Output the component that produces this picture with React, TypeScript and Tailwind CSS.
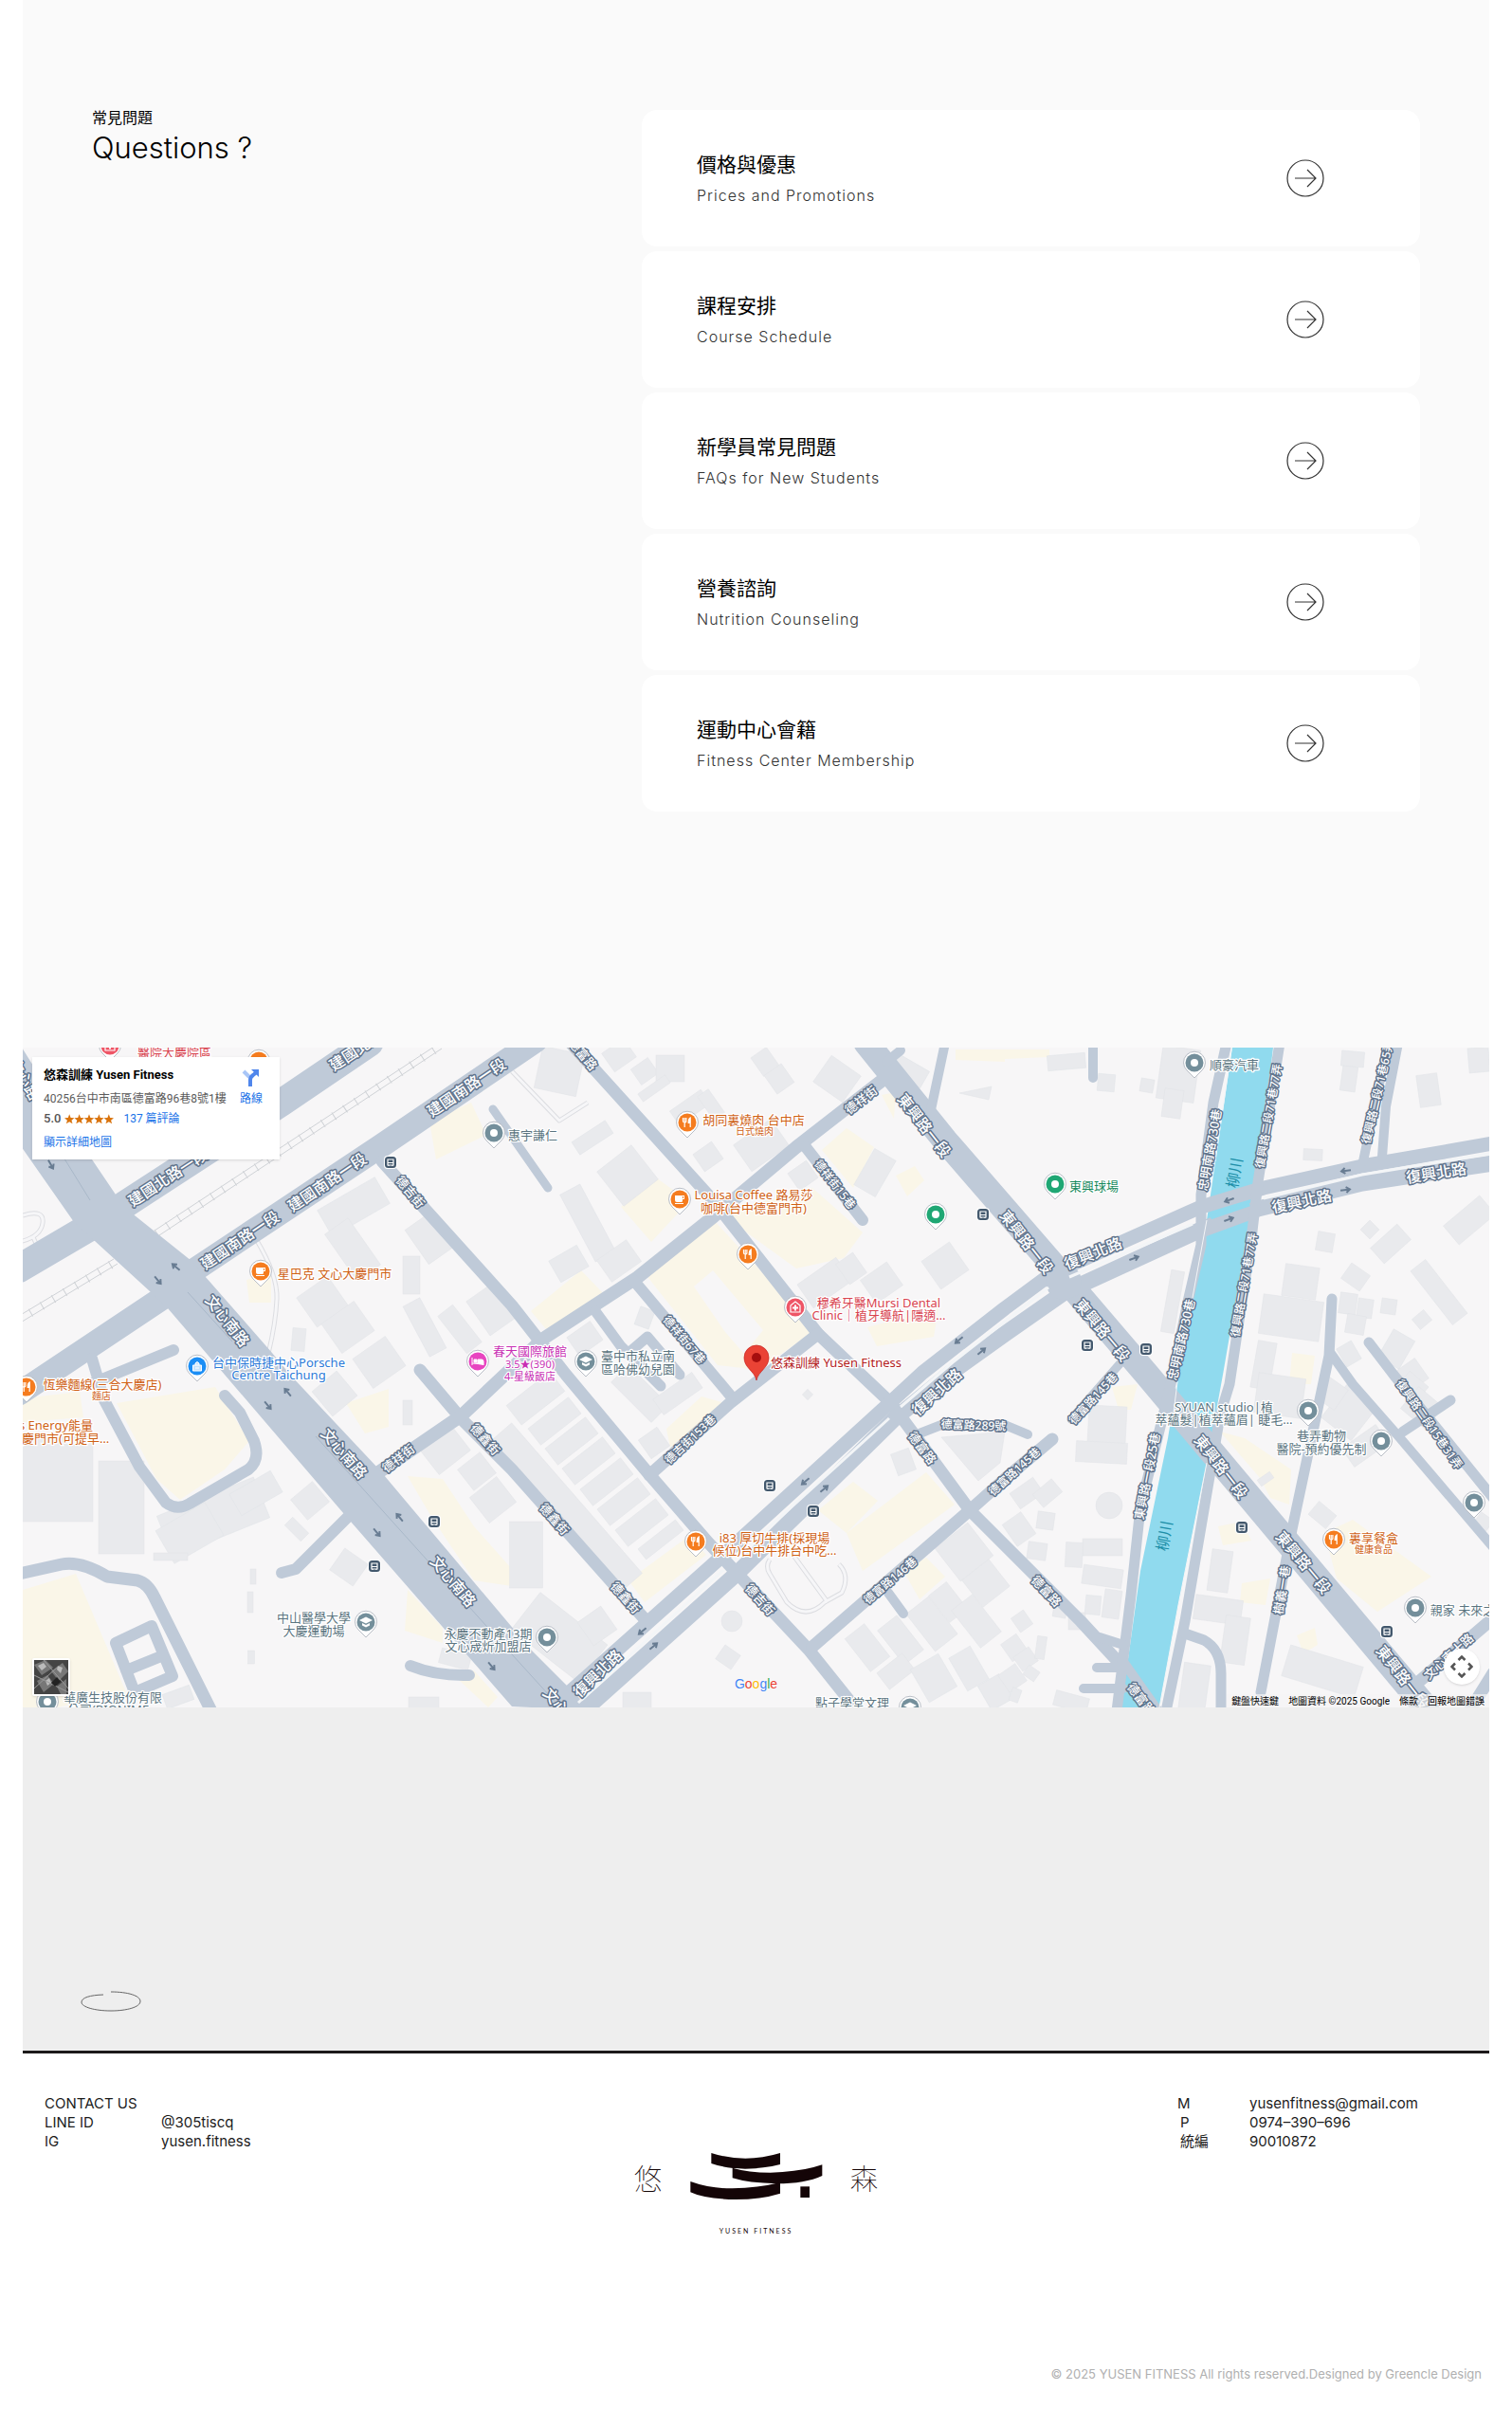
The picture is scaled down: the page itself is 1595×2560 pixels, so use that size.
import React from 'react';

const FAQS = [
  { title: '價格與優惠', subtitle: 'Prices and Promotions' },
  { title: '課程安排', subtitle: 'Course Schedule' },
  { title: '新學員常見問題', subtitle: 'FAQs for New Students' },
  { title: '營養諮詢', subtitle: 'Nutrition Counseling' },
  { title: '運動中心會籍', subtitle: 'Fitness Center Membership' },
];

const ORANGE = '#f57c1f';
const SLATE = '#748f9b';
const GREEN = '#1fa774';

// cx, cy, width, height, rotation
const BUILDINGS: number[][] = [
  [373, 1273, 70, 32, -30], [372, 1318, 30, 60, -35], [452, 1307, 30, 44, -35], [434, 1345, 18, 40, 0], [448, 1400, 20, 60, -28],
  [340, 1373, 40, 38, -35], [367, 1400, 42, 38, -35], [400, 1437, 42, 38, -35], [315, 1413, 14, 24, 5], [485, 1402, 20, 50, -38], [520, 1380, 38, 44, -35],
  [590, 1130, 45, 45, 12], [653, 1113, 28, 24, -35], [680, 1130, 22, 20, -35], [707, 1127, 30, 28, 0], [690, 1148, 35, 10, -35],
  [807, 1120, 20, 24, -35], [822, 1138, 22, 24, -35], [883, 1138, 38, 34, 35], [728, 1168, 40, 18, -35], [750, 1165, 14, 30, -35],
  [803, 1208, 48, 34, -35], [747, 1220, 24, 22, -35], [662, 1240, 46, 46, -38], [625, 1200, 42, 16, -33], [620, 1290, 24, 80, -28],
  [653, 1330, 38, 28, -35], [600, 1333, 34, 26, -30], [923, 1237, 26, 44, 30], [997, 1335, 36, 36, -35], [847, 1240, 24, 22, -35],
  [870, 1353, 50, 30, -35], [898, 1338, 22, 26, -35], [930, 1353, 34, 30, -35], [960, 1130, 36, 20, 30], [617, 1412, 30, 24, -35], [680, 1390, 16, 20, 20],
  [1125, 1120, 40, 16, -5], [1243, 1133, 40, 56, 8], [1237, 1164, 20, 30, 8], [1167, 1142, 18, 18, 5], [1210, 1145, 14, 14, 10],
  [1427, 1117, 24, 16, 5], [1423, 1138, 16, 26, 8], [1507, 1150, 22, 34, -8], [1560, 1118, 22, 26, -5], [1385, 1218, 20, 12, 3], [1550, 1287, 50, 26, -40],
  [1398, 1310, 18, 20, 10], [1445, 1297, 14, 14, 45], [1467, 1312, 38, 22, -42], [1518, 1363, 20, 72, -38], [1372, 1352, 36, 34, 8],
  [1430, 1347, 24, 20, 35], [1362, 1390, 64, 42, 8], [1422, 1375, 18, 22, 8], [1440, 1380, 16, 20, 8], [1465, 1378, 16, 16, 8],
  [1430, 1397, 20, 20, 10], [1500, 1392, 16, 14, -40], [1237, 1373, 14, 66, 10], [1333, 1440, 20, 50, 10], [1423, 1428, 18, 22, -30],
  [1473, 1423, 26, 34, 30], [1490, 1450, 24, 26, -35], [1350, 1472, 50, 42, 8],
  [60, 1560, 76, 90, 0], [128, 1590, 48, 98, 0], [225, 1600, 110, 46, -22], [200, 1617, 60, 40, -30], [270, 1575, 50, 26, -30], [180, 1642, 36, 8, 0],
  [327, 1583, 30, 28, -40], [313, 1613, 24, 12, 45], [368, 1653, 30, 28, 35], [267, 1663, 6, 16, 0], [264, 1690, 6, 22, 0], [265, 1748, 7, 14, 0],
  [353, 1470, 34, 34, -40], [430, 1490, 10, 26, 0], [470, 1530, 42, 32, -38], [503, 1552, 30, 28, -38], [520, 1582, 36, 34, -38],
  [447, 1796, 32, 12, 0], [480, 1750, 32, 16, 15], [188, 1790, 30, 16, -20],
  [565, 1475, 58, 26, -38], [585, 1499, 54, 22, -38], [603, 1520, 54, 22, -38], [621, 1541, 54, 22, -38], [640, 1563, 54, 22, -38],
  [658, 1584, 54, 22, -38], [677, 1606, 54, 22, -38], [697, 1624, 50, 14, -38], [595, 1592, 36, 210, -41],
  [555, 1640, 35, 70, 0], [590, 1727, 90, 50, 38], [630, 1715, 30, 30, -35], [675, 1470, 60, 26, 45], [715, 1470, 50, 20, -35],
  [690, 1522, 24, 24, -35], [953, 1542, 20, 24, -20], [768, 1748, 20, 18, 35], [852, 1471, 8, 8, 45], [1017, 1637, 44, 44, -38], [1040, 1670, 36, 36, -38],
  [983, 1713, 30, 50, -38], [950, 1730, 26, 46, -38], [915, 1738, 26, 44, -38], [1000, 1690, 24, 36, -38], [1030, 1710, 28, 50, -38],
  [945, 1763, 34, 22, -38], [985, 1770, 34, 40, -30], [1022, 1760, 26, 40, -30], [1050, 1785, 26, 30, -30], [672, 1795, 30, 20, 0],
  [1168, 1503, 40, 40, 3], [1162, 1532, 54, 22, 3], [1083, 1575, 30, 20, -35], [1105, 1575, 26, 18, -40], [1075, 1613, 24, 28, -35],
  [1103, 1604, 18, 18, 8], [1094, 1636, 20, 18, 8], [1163, 1632, 42, 18, 0], [1133, 1640, 18, 26, 3], [1163, 1663, 42, 20, 8],
  [1173, 1692, 18, 30, 8], [1153, 1693, 16, 20, 5], [1118, 1700, 14, 12, 10], [1136, 1710, 18, 18, 0], [1078, 1710, 16, 18, -35],
  [1070, 1738, 20, 22, -35], [1082, 1750, 20, 18, -35], [1098, 1738, 10, 24, 8], [1088, 1765, 14, 12, 35], [1068, 1770, 22, 22, -35], [1071, 1788, 10, 14, 20],
  [1130, 1795, 36, 16, 15], [1287, 1657, 22, 44, 8], [1285, 1698, 50, 26, 8], [1303, 1730, 26, 50, 8], [1260, 1780, 28, 50, 8], [1395, 1763, 80, 34, 17],
  [1395, 1598, 24, 18, 40], [1335, 1560, 16, 8, -35], [1423, 1490, 40, 44, 38], [1440, 1525, 44, 24, -35], [1490, 1463, 26, 22, 40], [1500, 1485, 34, 30, 40],
  [1405, 1470, 24, 26, 35], [1565, 1605, 16, 14, 35],
];

const GARDENS = [
  '123,1480 227,1463 263,1520 237,1550 190,1582 165,1560', '24,1677 80,1660 133,1785 60,1801 24,1801', '24,1475 84,1468 88,1495 24,1500',
  '680,1343 753,1287 860,1403 800,1445 757,1440', '760,1280 857,1253 910,1300 890,1327 840,1338',
  '655,1273 693,1243 727,1267 687,1310', '560,1383 613,1340 637,1365 577,1403', '867,1213 893,1190 922,1210 900,1253',
  '930,1155 945,1152 943,1180', '663,1667 727,1620 745,1640 680,1690', '863,1593 900,1563 926,1583 893,1617',
  '893,1617 977,1553 1007,1587 910,1657', '953,1657 977,1643 997,1663 970,1687', '703,1507 740,1473 765,1480 707,1527',
  '1397,1617 1427,1603 1510,1663 1453,1700 1410,1665', '1287,1510 1313,1517 1362,1550 1360,1587 1340,1580 1330,1560', '1173,1463 1200,1460 1193,1487 1180,1487',
  '430,1557 467,1560 500,1610 540,1655 540,1673 500,1667 455,1600', '430,1677 467,1717 467,1733 427,1720', '453,1183 497,1163 513,1197 460,1223',
  '1060,1107 1107,1107 1107,1115 1060,1117', '1363,1427 1387,1430 1383,1460 1360,1460', '1310,1670 1340,1665 1335,1693 1308,1690',
  '1285,1610 1310,1605 1320,1625 1290,1630', '260,1350 286,1342 286,1374 263,1374', '915,1400 990,1380 985,1410 925,1420', '945,1240 965,1230 975,1245 957,1262',
  '1368,1725 1387,1717 1390,1735 1375,1744', '484,1772 500,1762 525,1790 515,1801', '365,1480 410,1465 410,1505 385,1512', '1008,1107 1060,1107 1060,1120 1008,1118',
];

// path, stroke width
const ROADS: [string, number][] = [
  ['M131 1271L297 1163L390 1100', 29], ['M95 1294L20 1338', 30], ['M200 1343L403 1208L565 1098', 25], ['M170 1370L20 1470', 25],
  ['M403 1225L540 1377L597 1450L683 1553L747 1627L853 1740L905 1805', 13], ['M443 1445L487 1497L540 1550L682 1710', 13],
  ['M395 1556L487 1493L573 1412L673 1347L753 1283L840 1210L930 1140', 14], ['M600 1098L753 1267L863 1407L940 1480L1023 1593L1060 1630L1140 1710L1177 1750', 13],
  ['M668 1350L773 1475', 12], ['M863 1407L770 1480L685 1556', 13], ['M628 1383L655 1420L697 1462M662 1428L683 1410L717 1450', 11],
  ['M850 1210L910 1287', 12], ['M520 1170L578 1253', 9], ['M914 1100L997 1203L1122 1347L1210 1450L1505 1802', 27],
  ['M590 1800L603 1783L760 1643L933 1485L973 1448L1060 1380L1110 1343L1267 1273L1333 1253L1437 1230L1575 1206', 15],
  ['M615 1805L777 1660L943 1497L1007 1445L1060 1407L1123 1363L1267 1297L1327 1275L1437 1248L1575 1227', 17],
  ['M1294 1100L1280 1163L1267 1260L1267 1313L1253 1373L1235 1460L1227 1493L1203 1590L1193 1683L1178 1805', 11],
  ['M1350 1100L1327 1247L1320 1307L1297 1460L1287 1493L1250 1710L1230 1805', 11], ['M1250 1723L1270 1730Q1288 1740 1288 1765V1805', 11],
  ['M1405 1370L1402 1430L1363 1613L1330 1785', 11], ['M1402 1425L1427 1460L1477 1517L1575 1632', 10], ['M1444 1416L1470 1450L1575 1580M1530 1477L1480 1510', 11],
  ['M1475 1100L1462 1167L1458 1220M1463 1105L1438 1225', 10], ['M1153 1100V1137M997 1100L980 1180M950 1108L935 1120', 10],
  ['M970 1512L993 1503L1060 1503L1084 1513', 10], ['M1110 1518L1060 1560L1023 1593L857 1737', 13], ['M1187 1432L1130 1497', 9],
  ['M937 1680L953 1702', 10], ['M1160 1727L1185 1735M1157 1759H1185M1143 1781H1185M1183 1750L1222 1805', 10], ['M1493 1777L1575 1707M1575 1765L1550 1805', 13],
  ['M97 1433L110 1477L147 1547L175 1585Q187 1594 200 1586L262 1550Q275 1540 268 1520L253 1490L237 1472M100 1458L183 1424', 12],
  ['M20 1660L65 1650Q85 1646 113 1663L145 1667Q156 1670 163 1685L223 1805', 13], ['M122 1733L160 1715L182 1768L142 1785ZM133 1762L170 1747', 12],
  ['M367 1600L312 1655L297 1659', 12], ['M433 1757Q460 1768 495 1767', 12],
];

// text, x, y, rotation, size
const ROAD_LABELS: [string, number, number, number, number][] = [
  ['建國北路一段', 177, 1242, -33, 16], ['建國北路一段', 389, 1099, -33, 16], ['建國南路一段', 253, 1308, -34, 16], ['建國南路一段', 345, 1247, -34, 16], ['建國南路一段', 492, 1147, -34, 16],
  ['文心南路', 240, 1393, 52, 16], ['文心南路', 363, 1533, 49, 16], ['文心南路', 478, 1668, 50, 16], ['文心南路', 597, 1807, 50, 16], ['文心路', 26, 1138, 60, 16],
  ['德吉街', 433, 1257, 50, 13], ['德祥街', 908, 1160, -38, 13], ['德富路', 615, 1112, 50, 13], ['德祥街15巷', 881, 1249, 52, 12], ['德祥街67巷', 722, 1413, 50, 12],
  ['東興路一段', 975, 1187, 52, 16], ['東興路一段', 1083, 1310, 52, 16], ['東興路一段', 1163, 1403, 50, 16], ['東興路一段', 1288, 1547, 52, 16], ['東興路一段', 1375, 1648, 50, 16], ['東興路一段', 1480, 1769, 52, 16],
  ['復興北路', 988, 1468, -42, 16], ['復興北路', 630, 1765, -44, 16], ['復興北路', 1153, 1322, -22, 16], ['復興北路', 1373, 1267, -12, 16], ['復興北路', 1515, 1237, -9, 16],
  ['忠明南路730巷', 1276, 1213, -80, 13], ['忠明南路730巷', 1246, 1413, -77, 13], ['復興路二段71巷77弄', 1338, 1177, -80, 12], ['復興路二段71巷77弄', 1312, 1355, -80, 12], ['復興路二段71巷65弄', 1453, 1152, -77, 12],
  ['東興路一段25巷', 1210, 1557, -79, 13], ['德富路145巷', 1153, 1475, -47, 12], ['德富路145巷', 1070, 1552, -42, 12], ['德富路146巷', 939, 1667, -40, 12], ['德富路289號', 1027, 1503, 2, 12],
  ['德富路', 973, 1527, 53, 13], ['德富路', 1104, 1678, 47, 13], ['德富路', 1204, 1792, 53, 13], ['德祥街', 420, 1538, -38, 13], ['德鑫街', 512, 1518, 48, 13], ['德鑫街', 585, 1602, 48, 13], ['德鑫街', 660, 1685, 48, 13],
  ['德吉街', 802, 1687, 48, 13], ['德吉街153巷', 728, 1518, -43, 12], ['樹義一巷', 1352, 1677, -81, 13], ['復興路二段15巷31弄', 1508, 1502, 55, 12], ['文心南十路', 1528, 1747, -42, 13],
];

const ARROWS: number[][] = [
  [54, 1229, 60], [185, 1336, 220], [167, 1351, 50], [303, 1468, 230], [283, 1483, 50], [421, 1600, 230], [398, 1617, 50], [519, 1758, 50],
  [1011, 1414, 140], [1036, 1425, -40], [849, 1563, 140], [870, 1570, -40], [677, 1721, 140], [690, 1736, -40],
  [1296, 1266, 160], [1297, 1286, -20], [1197, 1327, -20], [1419, 1235, 172], [1420, 1255, -8],
];

const BUS_STOPS = [[412, 1226], [1037, 1281], [1147, 1419], [1209, 1423], [458, 1605], [395, 1652], [812, 1567], [858, 1594], [1310, 1611], [1463, 1721]];

type Poi = { x: number; y: number; color: string; icon?: string; text: string; lines?: [string, number, number, number?][] };

const POIS: Poi[] = [
  { x: 116, y: 1103, color: '#ee5566', icon: 'cross', text: '#d8434f', lines: [['醫院大慶院區', 184, 1115]] },
  { x: 273, y: 1119, color: ORANGE, text: '#cf6114' },
  { x: 275, y: 1341, color: ORANGE, icon: 'cup', text: '#cf6114', lines: [['星巴克 文心大慶門市', 353, 1348]] },
  { x: 208, y: 1441, color: '#1c8ef5', icon: 'bag', text: '#2b7ad8', lines: [['台中保時捷中心Porsche', 294, 1442], ['Centre Taichung', 294, 1455]] },
  { x: 28, y: 1463, color: ORANGE, icon: 'food', text: '#cf6114', lines: [['恆樂麵線(三合大慶店)', 108, 1465], ['麵店', 107, 1476, 10]] },
  { x: 504, y: 1436, color: '#e845c0', icon: 'bed', text: '#c82fb4', lines: [['春天國際旅館', 559, 1430], ['3.5★(390)', 559, 1443, 11], ['4-星級飯店', 559, 1456, 11]] },
  { x: 521, y: 1195, color: SLATE, text: '#5a7480', lines: [['惠宇謙仁', 562, 1202]] },
  { x: 725, y: 1184, color: ORANGE, icon: 'food', text: '#cf6114', lines: [['胡同裏燒肉 台中店', 795, 1186], ['日式燒肉', 796, 1197, 10]] },
  { x: 717, y: 1265, color: ORANGE, icon: 'cup', text: '#cf6114', lines: [['Louisa Coffee 路易莎', 795, 1265], ['咖啡(台中德富門市)', 795, 1279]] },
  { x: 789, y: 1323, color: ORANGE, icon: 'food', text: '#cf6114' },
  { x: 839, y: 1379, color: '#ee5566', icon: 'cross', text: '#d8434f', lines: [['穆希牙醫Mursi Dental', 927, 1379], ['Clinic｜植牙導航|隱適…', 927, 1392]] },
  { x: 987, y: 1281, color: GREEN, text: '#16895c' },
  { x: 1113, y: 1249, color: GREEN, text: '#16895c', lines: [['東興球場', 1154, 1256]] },
  { x: 1260, y: 1121, color: SLATE, text: '#5a7480', lines: [['順豪汽車', 1302, 1128]] },
  { x: 618, y: 1436, color: SLATE, icon: 'school', text: '#5a7480', lines: [['臺中市私立南', 673, 1435], ['區哈佛幼兒園', 673, 1449]] },
  { x: 386, y: 1711, color: SLATE, icon: 'school', text: '#5a7480', lines: [['中山醫學大學', 331, 1711], ['大慶運動場', 331, 1725]] },
  { x: 577, y: 1727, color: SLATE, text: '#5a7480', lines: [['永慶不動產13期', 515, 1728], ['文心宬炘加盟店', 515, 1741]] },
  { x: 734, y: 1626, color: ORANGE, icon: 'food', text: '#cf6114', lines: [['i83 厚切牛排(採現場', 817, 1627], ['候位)台中牛排台中吃…', 817, 1640]] },
  { x: 1380, y: 1488, color: SLATE, text: '#5a7480', lines: [['SYUAN studio|植', 1291, 1489], ['萃蘊髮|植萃蘊眉| 睫毛…', 1291, 1502]] },
  { x: 1457, y: 1520, color: SLATE, text: '#5a7480', lines: [['巷弄動物', 1394, 1519], ['醫院-預約優先制', 1394, 1533]] },
  { x: 1555, y: 1585, color: SLATE, text: '#5a7480' },
  { x: 1407, y: 1624, color: ORANGE, icon: 'food', text: '#cf6114', lines: [['裏享餐盒', 1449, 1627], ['健康食品', 1449, 1638, 10]] },
  { x: 1493, y: 1696, color: SLATE, text: '#5a7480', lines: [['親家 未來之', 1543, 1703]] },
  { x: 50, y: 1795, color: SLATE, text: '#5a7480', lines: [['華廣生技股份有限', 119, 1795], ['公司(BIONIME', 114, 1808]] },
  { x: 960, y: 1801, color: SLATE, icon: 'school', text: '#5a7480', lines: [['點子學堂文理', 899, 1801]] },
];

const PinIcon = ({ icon }: { icon?: string }) => {
  switch (icon) {
    case 'food':
      return (
        <g stroke="#fff" strokeWidth="1.2" fill="none">
          <path d="M-4.500 -5V-1.500Q-4.500 0 -2.800 0T-1.100 -1.500V-5M-2.800 -5V5" />
          <path d="M3.200 5V-5Q1.200 -4 1.200 .5H3.200" fill="#fff" />
        </g>
      );
    case 'cup':
      return <path d="M-5 -4H5V0H3V1.500Q3 3 1.500 3H-3Q-5 3 -5 1ZM3 -3V-1H4V-3ZM-5 4H4V5H-5Z" fill="#fff" fillRule="evenodd" />;
    case 'bag':
      return <path d="M-4.500 -1H4.500V5H-4.500ZM-2 -1V-3Q0 -6 2 -3V-1M-2 2H2" fill="#fff" stroke="#fff" strokeWidth="1" fillOpacity=".75" />;
    case 'bed':
      return <path d="M-6 -4V4M-6 2H6V4M-4 -2H-1V1H-4ZM0 -2H4Q6 -2 6 0V2H0Z" fill="#fff" stroke="#fff" strokeWidth="1" />;
    case 'cross':
      return (
        <g fill="none" stroke="#fff">
          <path d="M-5 5V-2L0 -6L5 -2V5Z" strokeWidth="1.200" />
          <path d="M-3 0.500H3M0 -2.500V3.500" strokeWidth="2" />
        </g>
      );
    case 'school':
      return <path d="M-7 -2L0 -5.500L7 -2L0 1.500ZM-4 1L0 3L4 1V3.500L0 5.500L-4 3.500Z" fill="#fff" />;
    default:
      return <circle r="4" fill="#fff" />;
  }
};

const MapCanvas = () => (
  <svg viewBox="24 1105 1547 696" className="block h-auto w-full bg-[#f7f6f7] font-['Noto_Sans','Noto_Sans_CJK_TC',sans-serif]" role="img" aria-label="悠森訓練 Yusen Fitness 地圖">
    {GARDENS.map(points => <polygon key={points} points={points} fill="#faf6e8" />)}
    <g fill="#e9eaed" stroke="#e1e3e7" strokeWidth=".5">
      {BUILDINGS.map(([x, y, w, h, r], i) => (
        <rect key={i} x={x - w / 2} y={y - h / 2} width={w} height={h} transform={`rotate(${r} ${x} ${y})`} />
      ))}
      <circle cx="772" cy="1710" r="11" />
      <circle cx="1170" cy="1588" r="14" />
      <path d="M993 1516L1060 1510L1055 1543L1032 1562ZM1012 1153L1046 1146L1043 1160Z" />
    </g>
    <path d="M732 1357L752 1340L805 1403L785 1428L765 1405Z" fill="#f7f6f7" />

    {/* railway */}
    <g fill="none" stroke="#cfd2d6">
      <path d="M163 1298L458 1104M168 1303L466 1106M20 1388L120 1328M20 1396L124 1333" />
      <path d="M165 1301L462 1105M20 1392L122 1331" strokeWidth="9" strokeDasharray="1 13" />
    </g>
    <g fill="none" strokeLinejoin="round">
      <g stroke="#dcdde1" strokeWidth="5">
        <path id="lane-a" d="M270 1307Q293 1345 292 1370T283 1428" />
        <path id="lane-b" d="M540 1130L590 1182L620 1163" />
        <path id="lane-c" d="M838 1642L873 1690M812 1645Q807 1652 812 1660L830 1690Q850 1710 870 1690L888 1680Q897 1662 885 1650" />
        <path id="lane-d" d="M24 1282Q47 1275 45 1290T20 1310M35 1305L40 1316" />
      </g>
      <g stroke="#f6f6f8" strokeWidth="3">
        <use href="#lane-a" />
        <use href="#lane-b" />
        <use href="#lane-c" />
        <use href="#lane-d" />
      </g>
    </g>

    <polygon points="1300,1105 1343,1105 1327,1240 1317,1293 1290,1450 1273,1543 1243,1693 1223,1801 1180,1801 1190,1750 1203,1657 1232,1517 1243,1450 1273,1287" fill="#90daee" />
    <g fill="none" stroke="#bfcad8" strokeLinecap="round" strokeLinejoin="round">
      {ROADS.map(([d, width]) => <path key={d} d={d} strokeWidth={width} />)}
    </g>
    <polygon fill="#bfcad8" points="20,1206 78,1289 100,1309 158,1362 177,1380 237,1450 363,1597 370,1605 540,1800 624,1804 560,1740 400,1550 306,1450 287,1427 202,1330 142,1282 122,1260 97,1223 20,1100" />
    <circle cx="1122" cy="1352" r="19" fill="#bfcad8" />
    <g fill="none" stroke="#f3f5f7" strokeWidth="3">
      <path d="M610 1796L763 1656M775 1644L938 1496M950 1484L1005 1437L1060 1394L1106 1358M1128 1347L1258 1291M1333 1264L1437 1239L1571 1217" />
      <path d="M1273 1287L1243 1450L1238 1490M1299 1107L1282 1225M1273 1543L1243 1693L1223 1801" strokeWidth="1" />
    </g>
    <path d="M1277 1284L1318 1270" stroke="#90daee" strokeWidth="5" />
    <path d="M198 1363L245 1415M333 1515L540 1745L590 1800M45 1185L95 1266" fill="none" stroke="#a9b8c9" />

    <g stroke="#687c92" strokeWidth="2" fill="none">
      {ARROWS.map(([x, y, r], i) => <path key={i} d="M-6 0H4M0 -3L4 0L0 3" transform={`translate(${x} ${y}) rotate(${r})`} />)}
    </g>

    <g fill="#fff" stroke="#5f738c" strokeWidth="3" strokeLinejoin="round" paintOrder="stroke" textAnchor="middle" dominantBaseline="central" className="font-medium">
      {ROAD_LABELS.map(([label, x, y, r, size], i) => (
        <text key={i} x={x} y={y} fontSize={size} transform={`rotate(${r} ${x} ${y})`}>{label}</text>
      ))}
    </g>
    <g fill="#1d8fa8" fontSize="16" textAnchor="middle" dominantBaseline="central">
      <text x="1302" y="1237" transform="rotate(-80 1302 1237)">柳川</text>
      <text x="1228" y="1620" transform="rotate(-80 1228 1620)">柳川</text>
    </g>

    {BUS_STOPS.map(([x, y]) => (
      <g key={`${x}-${y}`} transform={`translate(${x} ${y})`}>
        <rect x="-7" y="-7" width="14" height="14" rx="4" fill="#fff" />
        <rect x="-6" y="-6" width="12" height="12" rx="3.500" fill="#43586d" />
        <path d="M-3 -3H3V3H-3ZM-3 0.500H3M-2 3V4M2 3V4" fill="none" stroke="#fff" strokeWidth="1.200" />
      </g>
    ))}

    {POIS.map(poi => (
      <g key={`${poi.x}-${poi.y}`}>
        <g transform={`translate(${poi.x} ${poi.y})`}>
          <path d="M0 16L-8 8A11.500 11.500 0 1 1 8 8Z" fill="#fff" stroke="#b9bec6" strokeWidth="1" />
          <circle r="9.500" fill={poi.color} />
          <PinIcon icon={poi.icon} />
        </g>
        {poi.lines?.map(([line, x, y, size]) => (
          <text key={line} x={x} y={y} fontSize={size ?? 13} fill={poi.text} stroke="#fff" strokeWidth="2.500" strokeLinejoin="round" paintOrder="stroke" textAnchor="middle">{line}</text>
        ))}
      </g>
    ))}
    <g fontSize="13" fill="#cf6114" stroke="#fff" strokeWidth="2.500" paintOrder="stroke">
      <text x="20" y="1508">s Energy能量</text>
      <text x="23" y="1522">慶門市(可提早…</text>
    </g>

    <path d="M798 1456C796 1446 785 1443 785 1432A13 13 0 0 1 811 1432C811 1443 800 1446 798 1456Z" fill="#ea4335" stroke="#c5221f" strokeWidth=".7" />
    <circle cx="798" cy="1432" r="5" fill="#a50e0e" />
    <text x="813" y="1442" fontSize="13" fill="#b3201c" stroke="#fff" strokeWidth="2.500" paintOrder="stroke">悠森訓練 Yusen Fitness</text>
  </svg>
);

const PlaceCard = () => (
  <div className="absolute left-[10px] top-[10px] flex h-[108px] w-[261px] justify-between bg-white pl-3 pr-[18px] pt-2 text-xs shadow-sm font-['Roboto','Noto_Sans_CJK_TC',sans-serif]">
    <div className="whitespace-nowrap">
      <div className="text-[13px] font-bold leading-[22px] text-black">悠森訓練 Yusen Fitness</div>
      <div className="mt-1 leading-5 text-[#5b5b5b]">40256台中市南區德富路96巷8號1樓</div>
      <div className="flex items-center leading-[22px]">
        <span className="text-[13px] font-medium text-[#555]">5.0</span>
        <svg viewBox="0 0 55 11" className="ml-1 h-[11px] w-[52px]" fill="#d9730d" aria-label="5 顆星">
          {[0, 11, 22, 33, 44].map(x => (
            <path key={x} transform={`translate(${x} 0)`} d="M5.500 0L7 3.900L11 4.100L7.900 6.700L9 10.600L5.500 8.400L2 10.600L3.100 6.700L0 4.100L4 3.900Z" />
          ))}
        </svg>
        <a href="#reviews" className="ml-[10px] text-[#1a73e8]">137 篇評論</a>
      </div>
      <a href="#map" className="mt-1 block leading-5 text-[#1a73e8]">顯示詳細地圖</a>
    </div>
    <a href="#route" className="flex flex-col items-center pt-1 text-[#1a73e8]">
      <svg viewBox="0 0 20 20" className="h-5 w-5" fill="none">
        <path d="M2 3L8 9" stroke="#a9c6f7" strokeWidth="4" />
        <path d="M9 19V12Q9 9 12 7L15 4.500" stroke="#4f86ec" strokeWidth="4" />
        <path d="M10 1H18V9Z" fill="#4f86ec" />
      </svg>
      <span className="mt-1">路線</span>
    </a>
  </div>
);

const MapSection = () => (
  <section className="relative overflow-hidden">
    <MapCanvas />
    <PlaceCard />
    <button aria-label="顯示衛星圖像" className="absolute bottom-[12px] left-[10px] h-10 w-10 rounded-xs border-2 border-white bg-[#444] shadow">
      <svg viewBox="0 0 36 36" className="h-full w-full">
        <path d="M0 5L12 0L20 8L8 16ZM18 12L30 3L36 12L26 22ZM3 22L14 16L21 25L10 34ZM24 28L34 20V36H28Z" fill="#777" />
        <path d="M4 6L10 3L13 7L8 11ZM25 6L30 8L28 14L24 10ZM12 22L16 19L18 24L14 27Z" fill="#bbb" />
        <path d="M0 16L36 34M10 0L36 30M0 30L26 6" stroke="#999" strokeWidth="1" />
        <path d="M18 24L24 18L28 23L22 28Z" fill="#222" />
      </svg>
    </button>
    <div className="absolute bottom-[15px] left-1/2 -translate-x-1/2 text-sm font-medium font-['Liberation_Sans',sans-serif] [text-shadow:0_0_2px_#fff]" aria-label="Google">
      <span className="text-[#4285f4]">G</span><span className="text-[#ea4335]">o</span><span className="text-[#fbbc04]">o</span><span className="text-[#4285f4]">g</span><span className="text-[#34a853]">l</span><span className="text-[#ea4335]">e</span>
    </div>
    <button aria-label="地圖攝影機控制項" className="absolute bottom-6 right-[10px] flex h-[38px] w-[38px] items-center justify-center rounded-full bg-white shadow">
      <svg viewBox="0 0 24 24" className="h-6 w-6" fill="none" stroke="#555" strokeWidth="2.500">
        <path d="M8.500 5L12 1.500L15.500 5M8.500 19L12 22.500L15.500 19M5 8.500L1.500 12L5 15.500M19 8.500L22.500 12L19 15.500" />
      </svg>
    </button>
    <div className="absolute bottom-0 right-0 flex h-[14px] items-center gap-[10px] bg-[#f5f5f5]/70 px-[5px] text-[10px] text-black font-['Roboto','Noto_Sans_CJK_TC',sans-serif]">
      <button>鍵盤快速鍵</button>
      <span>地圖資料 ©2025 Google</span>
      <a href="#terms">條款</a>
      <a href="#report">回報地圖錯誤</a>
    </div>
  </section>
);

const Logo = () => (
  <div className="flex flex-col items-center text-[#140507]">
    <div className="flex items-center gap-7">
      <span className="w-8 text-center text-[30px] leading-8 font-thin font-['Noto_Sans_CJK_TC',sans-serif]">悠</span>
      <svg viewBox="266 62 420 153" className="h-[51px] w-[140px]" fill="currentColor">
        <path d="M333 65Q440 99 551 65V101Q500 114 440 115Q375 113 333 98Z" />
        <path d="M400 112Q450 127 520 127Q620 124 684 102V137Q630 162 540 162Q450 160 400 144Z" />
        <path d="M267 155Q330 178 400 177Q480 176 551 158V193Q490 212 410 212Q310 210 267 189Z" />
        <rect x="615" y="171" width="29" height="35" />
      </svg>
      <span className="w-8 text-center text-[30px] leading-8 font-thin font-['Noto_Sans_CJK_TC',sans-serif]">森</span>
    </div>
    <div className="mt-6 text-[7px] leading-4 tracking-[2px] font-['Lato',sans-serif]">YUSEN FITNESS</div>
  </div>
);

const Footer = () => (
  <footer className="border-t-[3px] border-[#1d1a1b] text-[15px] leading-5 text-[#1c1c1c]">
    <div className="grid grid-cols-3 pl-[23px] pr-[78px] pt-[43px]">
      <dl className="grid grid-cols-[123px_auto] content-start justify-start">
        <dt className="col-span-2">CONTACT US</dt>
        <dt>LINE ID</dt>
        <dd>@305tiscq</dd>
        <dt>IG</dt>
        <dd>yusen.fitness</dd>
      </dl>
      <div className="flex justify-center pl-[55px] pt-[61px]">
        <Logo />
      </div>
      <dl className="grid grid-cols-[76px_175px] content-start justify-end whitespace-nowrap">
        <dt>M</dt>
        <dd>yusenfitness@gmail.com</dd>
        <dt className="pl-[3px]">P</dt>
        <dd>0974–390–696</dd>
        <dt className="pl-[3px]">統編</dt>
        <dd>90010872</dd>
      </dl>
    </div>
    <p className="mt-[133px] pb-[46px] pr-2 text-right text-[13px] text-[#b0b0b0]">© 2025 YUSEN FITNESS All rights reserved.Designed by Greencle Design</p>
  </footer>
);

export default function App() {
  return (
    <main className="bg-white px-6 font-['Inter','Noto_Sans_CJK_TC',sans-serif]">
      <section className="flex justify-between bg-[#fafafa] px-[73px] pb-[249px] pt-[116px]">
        <header className="text-black">
          <p className="text-base leading-4">常見問題</p>
          <h1 className="mt-1 text-[31px] leading-10 font-light">Questions ?</h1>
        </header>
        <ul className="flex w-[58.6%] flex-col gap-[5px]">
          {FAQS.map(faq => (
            <li key={faq.title}>
              <button className="flex h-36 w-full items-center justify-between rounded-2xl bg-white pl-[58px] pr-[101px] text-left">
                <span className="pt-1">
                  <span className="block text-[21px] leading-8 text-black">{faq.title}</span>
                  <span className="block text-base leading-8 font-light tracking-[1px] text-[#333]">{faq.subtitle}</span>
                </span>
                <svg viewBox="0 0 40 40" className="h-10 w-10" fill="none" stroke="#333" strokeWidth="1.200">
                  <circle cx="20" cy="20" r="19" />
                  <path d="M9 20H31M22 11L31 20L22 29" />
                </svg>
              </button>
            </li>
          ))}
        </ul>
      </section>

      <MapSection />

      <section className="bg-[#eee] pb-[41px] pl-[61px] pt-[299px]">
        <svg viewBox="0 0 64 22" className="h-[22px] w-16" fill="none" stroke="#666">
          <path d="M32 1C50 1 63 5 63 11C63 17 49 21 32 21S1 17 1 12C1 7 10 4.500 24 4" />
        </svg>
      </section>

      <Footer />
    </main>
  );
}
